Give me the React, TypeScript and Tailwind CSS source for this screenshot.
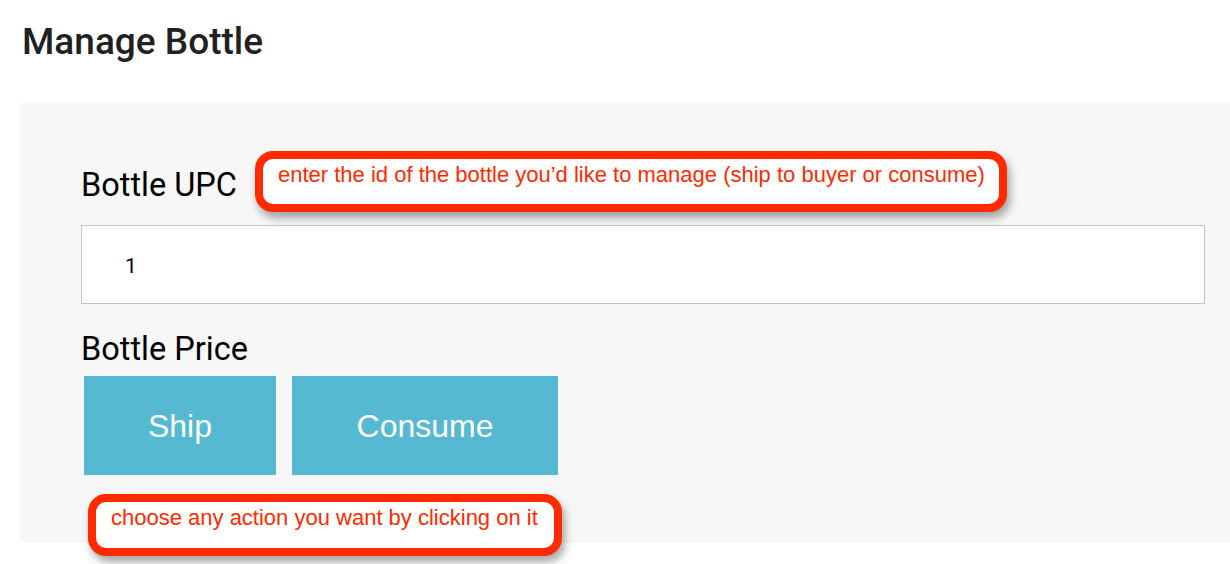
import React, { useState } from 'react';

function Callout({ text, className }: { text: string; className?: string }) {
  return (
    <div
      className={
        'h-[61px] rounded-[18px] border-[8px] border-[#ff2a00] bg-white pl-[15px] pr-[14px] pt-[4px] shadow-[3px_6px_8px_rgba(0,0,0,0.35)] ' +
        (className ?? '')
      }
    >
      <span className="block whitespace-nowrap font-['Liberation_Sans',Arial,sans-serif] text-[22px] leading-[24px] text-[#ff2a00]">
        {text}
      </span>
    </div>
  );
}

export default function App() {
  const [upc, setUpc] = useState('1');

  return (
    <div className="min-h-[564px] w-[1230px] overflow-hidden bg-white font-['Roboto',sans-serif]">
      <h1 className="ml-[22px] mt-[23px] h-[38px] text-[37px] font-medium leading-[38px] text-[#212121]">
        Manage Bottle
      </h1>

      <div className="relative ml-[20px] mt-[41px] w-[1240px] rounded-[5px] bg-[#f7f7f7] pb-[68px] pl-[61px] pt-[49px]">
        <div className="flex items-start gap-[18px]">
          <label className="mt-[19px] h-[31px] text-[32.5px] leading-[31px] text-black">Bottle UPC</label>
          <Callout text="enter the id of the bottle you’d like to manage (ship to buyer or consume)" />
        </div>

        <input
          value={upc}
          onChange={(e) => setUpc(e.target.value)}
          className="mt-[13px] block h-[79px] w-[1124px] border border-[#c4c4c4] bg-white pl-[43px] pt-[2px] text-[21px] text-black outline-none"
        />

        <label className="mt-[30px] block h-[31px] text-[32.5px] leading-[31px] text-black">Bottle Price</label>

        <div className="ml-[3px] mt-[11px] flex gap-[16px]">
          <button className="h-[99px] w-[192px] bg-[#54b9d1] font-['Liberation_Sans',Arial,sans-serif] text-[32px] text-white">
            Ship
          </button>
          <button className="h-[99px] w-[266px] bg-[#54b9d1] font-['Liberation_Sans',Arial,sans-serif] text-[32px] text-white">
            Consume
          </button>
        </div>

        <Callout
          text="choose any action you want by clicking on it"
          className="absolute left-[68px] top-[392px] h-[62px] w-[474px]"
        />
      </div>
    </div>
  );
}
